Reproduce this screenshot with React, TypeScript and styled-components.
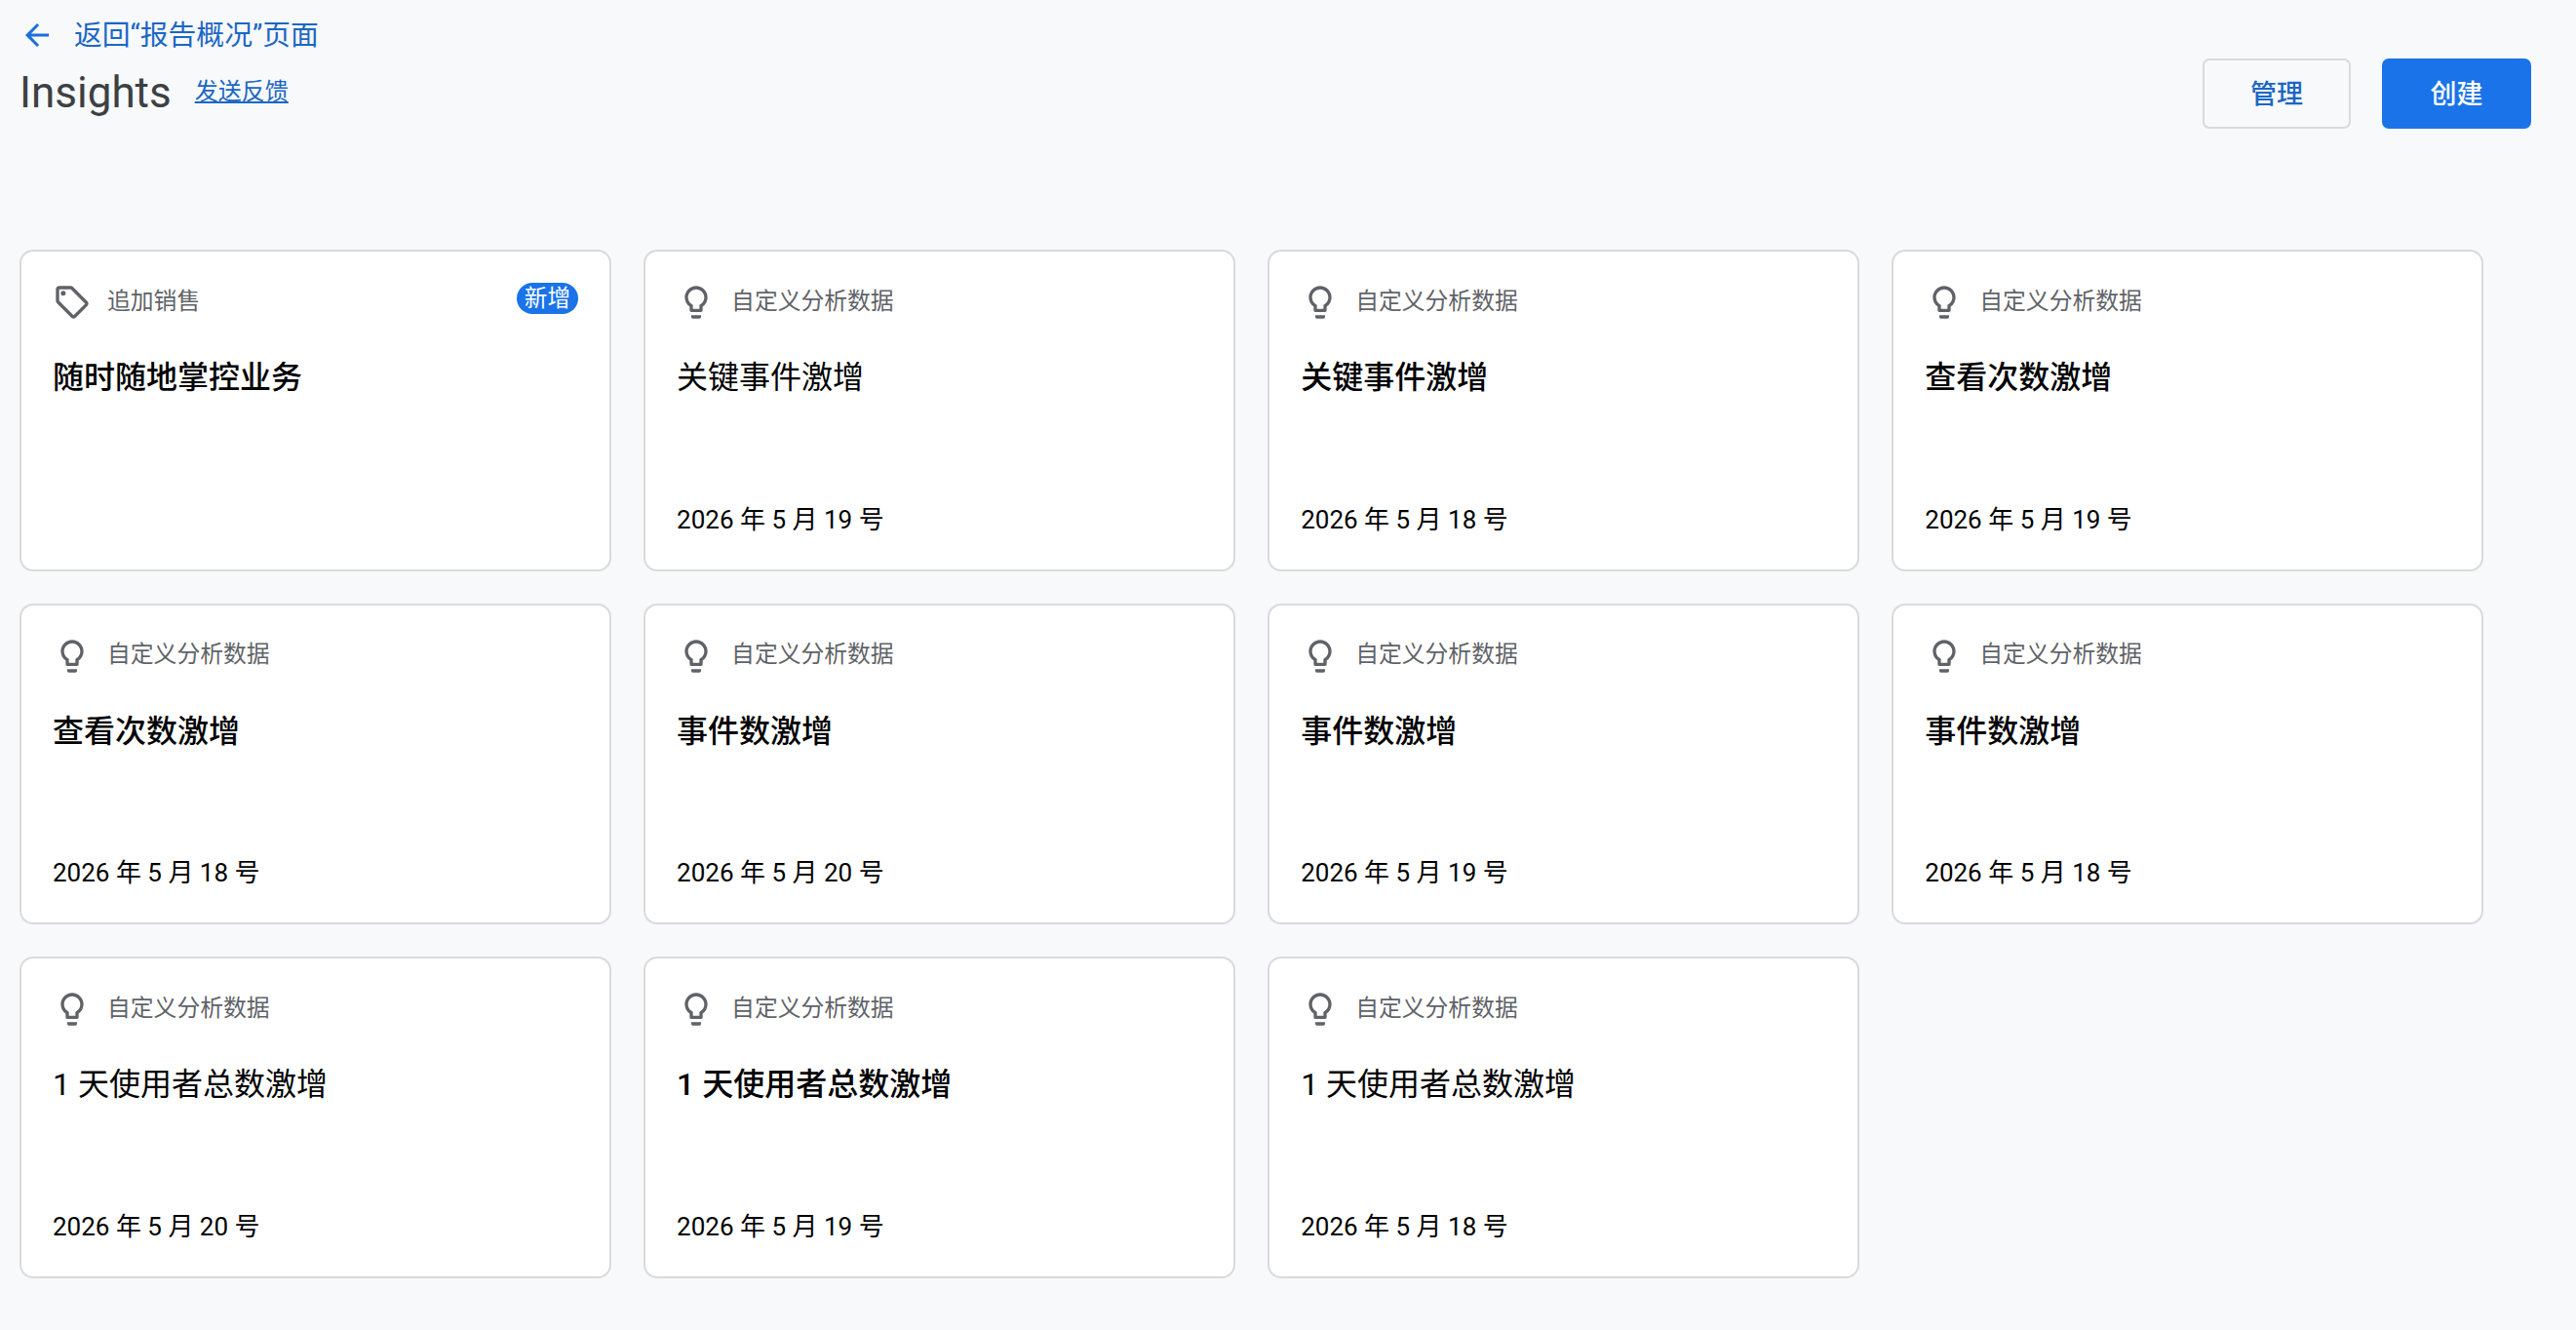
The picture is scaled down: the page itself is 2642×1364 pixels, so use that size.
import React from 'react'
import styled, { createGlobalStyle } from 'styled-components'

type InsightCard = {
  kind: 'sales' | 'custom'
  title: string
  date?: string
  strong?: boolean
}

const cards: InsightCard[] = [
  { kind: 'sales', title: '随时随地掌控业务', strong: true },
  { kind: 'custom', title: '关键事件激增', date: '2026 年 5 月 19 号' },
  { kind: 'custom', title: '关键事件激增', date: '2026 年 5 月 18 号', strong: true },
  { kind: 'custom', title: '查看次数激增', date: '2026 年 5 月 19 号', strong: true },
  { kind: 'custom', title: '查看次数激增', date: '2026 年 5 月 18 号', strong: true },
  { kind: 'custom', title: '事件数激增', date: '2026 年 5 月 20 号', strong: true },
  { kind: 'custom', title: '事件数激增', date: '2026 年 5 月 19 号', strong: true },
  { kind: 'custom', title: '事件数激增', date: '2026 年 5 月 18 号', strong: true },
  { kind: 'custom', title: '1 天使用者总数激增', date: '2026 年 5 月 20 号' },
  { kind: 'custom', title: '1 天使用者总数激增', date: '2026 年 5 月 19 号', strong: true },
  { kind: 'custom', title: '1 天使用者总数激增', date: '2026 年 5 月 18 号' },
]

const ArrowIcon = () => (
  <BackIcon viewBox="0 0 24 24">
    <path d="M20 11H7.83l5.59-5.59L12 4l-8 8 8 8 1.41-1.41L7.83 13H20v-2z" />
  </BackIcon>
)

const BulbIcon = () => (
  <MetaIcon viewBox="0 0 24 24">
    <path d="M9 21c0 .55.45 1 1 1h4c.55 0 1-.45 1-1v-1H9v1zm3-19C8.14 2 5 5.14 5 9c0 2.38 1.19 4.47 3 5.74V17c0 .55.45 1 1 1h6c.55 0 1-.45 1-1v-2.26c1.81-1.27 3-3.36 3-5.74 0-3.86-3.14-7-7-7zm2.85 11.1l-.85.6V16h-4v-2.3l-.85-.6C7.8 12.16 7 10.63 7 9c0-2.76 2.24-5 5-5s5 2.24 5 5c0 1.63-.8 3.16-2.15 4.1z" />
  </MetaIcon>
)

const TagIcon = () => (
  <MetaIcon viewBox="0 0 24 24">
    <path d="M21.41 11.41l-8.83-8.83C12.21 2.21 11.7 2 11.17 2H4C2.9 2 2 2.9 2 4v7.17c0 .53.21 1.04.59 1.41l8.83 8.83c.78.78 2.05.78 2.83 0l7.17-7.17c.79-.78.79-2.04-.01-2.83zM12.83 20L4 11.17V4h7.17L20 12.83 12.83 20z" />
    <circle cx="6.5" cy="6.5" r="1.5" />
  </MetaIcon>
)

const App: React.FC = () => (
  <Page>
    <GlobalStyle />
    <BackLink>
      <ArrowIcon />
      <span>返回“报告概况”页面</span>
    </BackLink>
    <Header>
      <TitleGroup>
        <PageTitle>Insights</PageTitle>
        <FeedbackLink>发送反馈</FeedbackLink>
      </TitleGroup>
      <Actions>
        <Button>管理</Button>
        <Button primary>创建</Button>
      </Actions>
    </Header>
    <CardGrid>
      {cards.map((c, i) => (
        <Card key={i}>
          <CardHead>
            {c.kind === 'sales' ? <TagIcon /> : <BulbIcon />}
            <MetaLabel>{c.kind === 'sales' ? '追加销售' : '自定义分析数据'}</MetaLabel>
            {c.kind === 'sales' && <Badge>新增</Badge>}
          </CardHead>
          <CardTitle strong={c.strong}>{c.title}</CardTitle>
          {c.date && <CardDate>{c.date}</CardDate>}
        </Card>
      ))}
    </CardGrid>
  </Page>
)

const GlobalStyle = createGlobalStyle`
  html, body {
    margin: 0;
    padding: 0;
    background: #f7f9fb;
    font-family: Roboto, "Noto Sans CJK SC", sans-serif;
  }
`

const Page = styled.div`
  box-sizing: border-box;
  width: 2642px;
  height: 1364px;
  padding: 16px 46px 0 20px;
  overflow: hidden;
`

const BackLink = styled.a`
  display: flex;
  align-items: center;
  gap: 20px;
  height: 40px;
  color: #1b66c4;
  font-size: 28.8px;
  line-height: 40px;
`

const BackIcon = styled.svg`
  width: 36px;
  height: 36px;
  fill: #1a6fdc;
  flex: none;
`

const Header = styled.div`
  display: flex;
  justify-content: space-between;
  align-items: flex-start;
  height: 196px;
  margin-top: 4px;
`

const TitleGroup = styled.div`
  display: flex;
  align-items: center;
  gap: 24px;
  height: 70px;
`

const PageTitle = styled.h1`
  margin: 0;
  color: #3c4043;
  font-size: 44px;
  font-weight: 400;
  line-height: 70px;
`

const FeedbackLink = styled.a`
  color: #1b66c4;
  font-size: 24px;
  line-height: 32px;
  text-decoration: underline;
  margin-top: -2px;
`

const Actions = styled.div`
  display: flex;
  gap: 32px;
`

const Button = styled.button<{ primary?: boolean }>`
  box-sizing: border-box;
  width: ${p => (p.primary ? '153px' : '152px')};
  height: 72px;
  padding: 0 0 3px;
  border: 2px solid ${p => (p.primary ? '#1a73e8' : '#d9dadd')};
  border-radius: 7px;
  background: ${p => (p.primary ? '#1a73e8' : 'transparent')};
  color: ${p => (p.primary ? '#fff' : '#1b66c4')};
  font-family: inherit;
  font-size: 27px;
  font-weight: 500;
`

const CardGrid = styled.div`
  display: grid;
  grid-template-columns: repeat(4, 607px);
  grid-auto-rows: 329.5px;
  column-gap: 33.1px;
  row-gap: 33px;
`

const Card = styled.div`
  box-sizing: border-box;
  display: flex;
  flex-direction: column;
  padding: 32px 32px 0;
  border: 2px solid #d9dadd;
  border-radius: 14px;
  background: #fff;
`

const CardHead = styled.div`
  display: flex;
  align-items: center;
  height: 40px;
`

const MetaIcon = styled.svg`
  width: 40px;
  height: 40px;
  fill: #5f6368;
  flex: none;
`

const MetaLabel = styled.span`
  margin-left: 16px;
  margin-top: -3px;
  color: #5f6368;
  font-size: 23.8px;
  line-height: 32px;
`

const Badge = styled.span`
  margin-left: auto;
  margin-top: -8px;
  padding: 0 8px;
  border-radius: 16px;
  background: #1a73e8;
  color: #fff;
  font-size: 23.6px;
  line-height: 32px;
`

const CardTitle = styled.div<{ strong?: boolean }>`
  margin-top: 33px;
  color: #000;
  font-size: 32px;
  font-weight: ${p => (p.strong ? 500 : 400)};
  line-height: 48px;
`

const CardDate = styled.div`
  margin-top: auto;
  margin-bottom: 33px;
  color: #000;
  font-size: 26px;
  line-height: 36px;
`

export default App
